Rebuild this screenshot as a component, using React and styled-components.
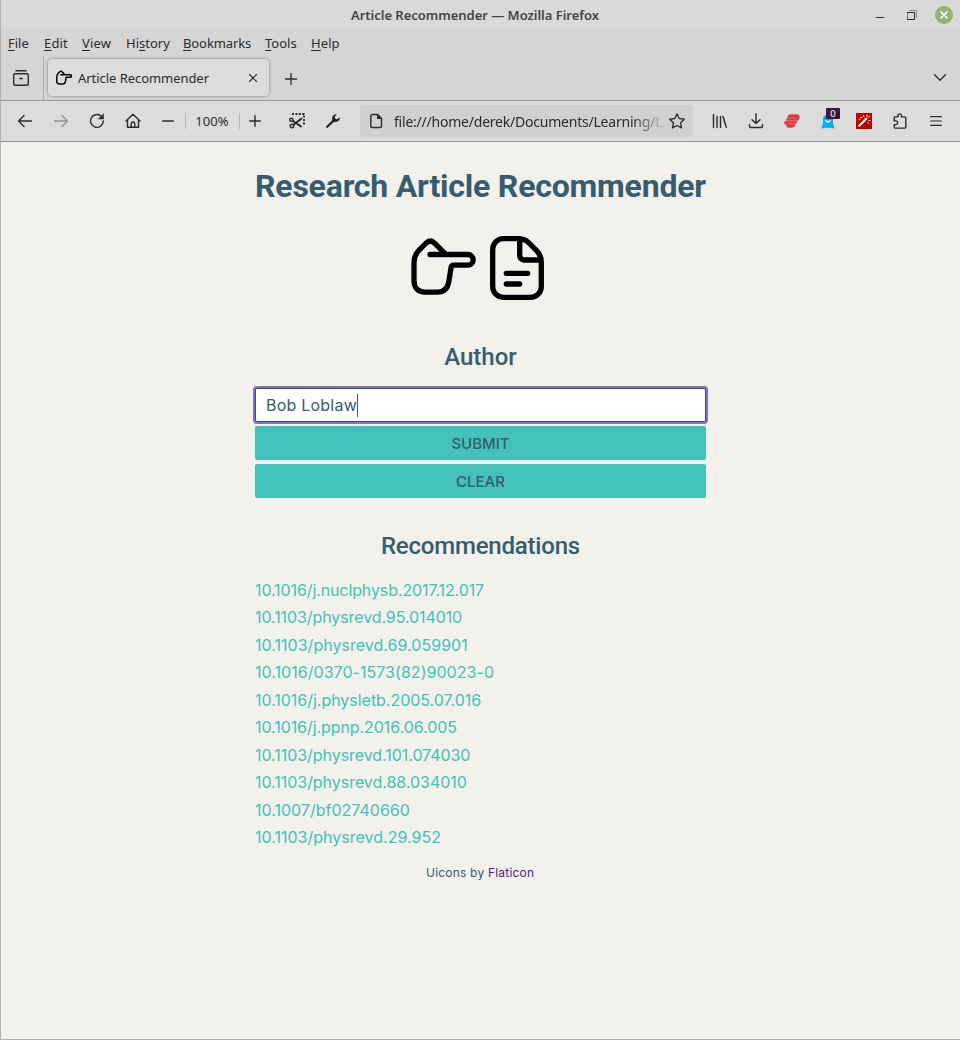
import React from "react";
import styled, { createGlobalStyle } from "styled-components";

const Global = createGlobalStyle`
  * { box-sizing: border-box; }
  body { margin: 0; background: #f2f1eb; }
`;

const ui = `"Noto Sans", "Open Sans", sans-serif`;
const head = `Roboto, sans-serif`;
const copy = `Inter, "Liberation Sans", sans-serif`;

const Window = styled.div`
  width: 960px; height: 1040px; display: flex; flex-direction: column; overflow: hidden;
  border-left: 1px solid #b1b1b0; border-bottom: 1px solid #b1b1b0;
  background: #f2f1eb; font-family: ${ui}; font-size: 13px; color: #2b2b2b;
`;
const Text = styled.span`white-space: nowrap; letter-spacing: ${(p) => p.$ls || 0}px;`;

const TitleBar = styled.header`
  height: 30px; flex: none; display: flex; align-items: center; background: #d9d9d9;
  font-weight: 600; color: #444; padding-left: 350px;
`;
const WindowButtons = styled.div`margin-left: auto; display: flex; align-items: center; height: 30px;`;
const MenuBar = styled.nav`
  height: 26px; flex: none; background: #d5d5d5; padding: 0 7px; display: flex; align-items: center;
`;
const MenuItem = styled.span`
  width: ${(p) => p.$w}px; line-height: 18px; white-space: nowrap; letter-spacing: ${(p) => p.$ls || 0}px;
  u { text-decoration: underline; text-decoration-thickness: 1px; text-underline-offset: 2px; }
`;
const TabStrip = styled.div`
  height: 45px; flex: none; background: #d5d5d5; border-bottom: 1px solid #949494; display: flex; align-items: stretch;
`;
const TabList = styled.div`width: 43px; border-right: 1px solid #aeaeae; display: flex; align-items: center; padding-left: 10px;`;
const Tab = styled.div`
  width: 221px; height: 37px; margin: 3px 0 0 4px; border-radius: 4px; background: #dcdcdc;
  box-shadow: 0 0 3px rgba(0,0,0,.45); display: flex; align-items: center; padding: 0 11px 0 8px;
`;
const TabName = styled.span`flex: 1; padding-left: 6px; white-space: nowrap; letter-spacing: -0.05px;`;
const IconCell = styled.span`
  width: ${(p) => p.$w || 36}px; height: ${(p) => p.$h || 40}px; flex: none; display: flex; align-items: center; justify-content: center;
  position: relative; svg { display: block; }
`;
const AllTabs = styled(IconCell)`margin-left: auto; margin-right: 2px;`;
const NavBar = styled.div`
  height: 41px; flex: none; background: #dcdcdc; border-bottom: 1px solid #949494; display: flex; align-items: center; padding-left: 6px;
`;
const Rule = styled.i`width: 1px; height: 16px; background: #b4b4b4;`;
const Zoom = styled.span`width: 53px; text-align: center; letter-spacing: 0.1px; padding-right: 1px;`;
const UrlBar = styled.div`
  width: 333px; height: 32px; margin-left: 18px; border-radius: 4px; background: #d0d0d0; display: flex; align-items: center; padding-left: 8px;
`;
const Url = styled.span`
  width: 268px; margin-left: 10px; overflow: hidden; white-space: nowrap; font-size: 14px; letter-spacing: -0.22px;
  mask-image: linear-gradient(to right, #000 238px, transparent 272px);
`;
const Extensions = styled.div`display: flex; margin-left: 9px;`;
const Badge = styled.b`
  position: absolute; left: 16px; top: 7px; width: 14px; height: 11px; border-radius: 1px; background: #3d1540; color: #fff;
  font: 9.5px/11px ${ui}; text-align: center;
`;

const Page = styled.main`
  width: 451px; margin-left: 254px; display: flex; flex-direction: column; color: #355c70; font-family: ${copy};
`;
const Title = styled.h1`
  margin: 24px 0 0; height: 40px; font: 700 32px/40px ${head}; white-space: nowrap; letter-spacing: -0.2px;
`;
const Art = styled.div`height: 64px; margin: 30px 0 0 156px; display: flex; gap: 15px; svg { overflow: visible; }`;
const Heading = styled.h2`
  margin: ${(p) => p.$top}px 0 0; height: 30px; font: 500 24px/30px ${head}; text-align: center; white-space: nowrap; letter-spacing: ${(p) => p.$ls || 0}px;
`;
const Field = styled.div`
  height: 34px; margin-top: 16px; padding-left: 10px; display: flex; align-items: center; background: #fff; border: 1px solid #2f5468;
  border-radius: 2px; box-shadow: 0 0 0 2px #8d6cc6; font-size: 16px;
`;
const Caret = styled.i`width: 1px; height: 23px; background: #355c70;`;
const Button = styled.button`
  height: 34px; margin-top: 4px; border: 0; border-radius: 2px; background: #43c1ba; color: #355c70; padding: 2px 0 0;
  font: 500 15px/32px ${copy};
`;
const List = styled.div`display: flex; flex-direction: column; margin-top: 15.7px; color: #43c1ba; font-size: 16px; line-height: 27.5px;`;
const Credit = styled.footer`
  margin-top: 11.3px; height: 20px; font-size: 12px; line-height: 20px; padding-left: 171px; white-space: pre; letter-spacing: 0.2px;
  a { color: #551a8b; }
`;

const S = ({ w = 16, h = w, vb, sw = 1.4, c = "#2b2b2b", children }) => (
  <svg width={w} height={h} viewBox={vb || `0 0 ${w} ${h}`} fill="none" stroke={c} strokeWidth={sw} strokeLinecap="round" strokeLinejoin="round">{children}</svg>
);
const Hand = ({ size = 64 }) => (
  <svg width={size} height={size} viewBox="0 0 64 64" fill="none" stroke="#000" strokeWidth={size > 20 ? 5.3 : 6} strokeLinecap="round" strokeLinejoin="round">
    <path d="M18.7 18.7H56.6a5.2 5.2 0 0 1 0 10.6H42.5C40 29.3 40 30 39.7 32L37.5 46C36.2 53 32.5 56.3 26.5 56.3H13.5C7 56.3 2.7 52 2.7 45V27C2.7 21 4.5 17.5 8 14L14.5 7.5C17.5 4.6 20.5 4.6 23.5 7.5L34.7 18.7" transform="translate(.3 -.2)" />
  </svg>
);
const Paper = () => (
  <svg width="54" height="64" viewBox="0 0 54 64" fill="none" stroke="#000" strokeWidth="5.3" strokeLinecap="round" strokeLinejoin="round">
    <path d="M13.4 2.7H28C33 2.7 36 4 39 7L46.6 14.6C50 18 51.3 21 51.3 26V50.7A10.6 10.6 0 0 1 40.7 61.3H13.4A10.6 10.6 0 0 1 2.7 50.7V13.4A10.6 10.6 0 0 1 13.4 2.7ZM29.7 3.5V19.5a4.3 4.3 0 0 0 4.3 4.5H50.5M16.3 37.3H37.7M16.3 48H29.7" />
  </svg>
);
const Scissors = () => (
  <S>
    <path d="M3 1H15V12" strokeDasharray="2 1.4" strokeWidth="1.8" strokeLinecap="butt" />
    <circle cx="2.4" cy="6.8" r="1.6" /><circle cx="3" cy="13" r="1.8" />
    <path d="M3.8 7.8 12 13.5M4.5 11.8 12.5 5.5" strokeWidth="2" />
  </S>
);
const Wrench = () => (
  <svg width="14" height="14" viewBox="0 0 14 14"><path d="M1.2 12.8 7 7.2" stroke="#222" strokeWidth="2.2" strokeLinecap="round" /><path d="M10.8 .3 8.8 2.8 9.3 4.8 11.3 5.2 13.7 3.2C14.3 6.2 11.8 8.4 9 7.8L7.8 8.6 5.600 6.400 6.300 5.200C5.600 2.400 7.800 -.3 10.800 .3Z" fill="#222" /></svg>
);
const Express = () => (
  <svg width="16" height="14" viewBox="0 0 16 14">
    <path d="M6.500 .3H12.500Q16 .6 15.700 3.500Q15.300 6.500 12.800 7.200Q13.500 9.500 11.500 9.800Q11.300 13.500 8 13.700H4.800Q2.200 13.500 2.300 11Q.2 10.800 .3 8.800Q.4 6.900 2.500 6.800Q1.800 4.400 3.300 4Q3.500 .6 6.500 .3Z" fill="#dd3a45" />
    <path d="M3.300 4H11.500M4.500 10H11.500M2.500 6.900H13" stroke="#e4a0a4" strokeWidth=".55" />
  </svg>
);
const Ghost = () => (
  <svg width="14" height="15" viewBox="0 0 14 15"><path d="M2 5Q2 .5 7 .5T12 5V10L13.5 14Q12 15 10.5 13.5Q9 15 7 13.5Q5 15 3.5 13.5Q2 15 .3 14L2 10Z" fill="#00aef0" /><path d="M4.3 6.5Q7 10.5 9.7 6.5Q7 8 4.3 6.5Z" fill="#fff" stroke="#fff" strokeWidth=".6" /></svg>
);
const Wand = () => (
  <svg width="16" height="16" viewBox="0 0 16 16" fill="none" stroke="#fff" strokeLinecap="round"><path d="M0 0H16V16H0Z" fill="#c00000" stroke="none" /><path d="M3.3 12.7 8.3 7.7" strokeWidth="2.2" /><path d="M9.5 6.5 10.2 5.8" strokeWidth="2.2" /><path d="M4.5 4.5H6M7.5 2.5 8 4M11 2V3.5M13.5 3.5 12.5 4.3M13 7.5H14M11.5 9 12.5 10.2M3.2 6.5 3.8 6.3" strokeWidth=".9" /></svg>
);

const menus = [["File", 0, 36, 0], ["Edit", 0, 38, 0.15], ["View", 0, 44, 0.15], ["History", 2, 57, 0], ["Bookmarks", 0, 82, -0.1], ["Tools", 0, 46, 0], ["Help", 0, 40, 0.1]];
const articles = [
  ["10.1016/j.nuclphysb.2017.12.017", -0.105], ["10.1103/physrevd.95.014010", -0.09], ["10.1103/physrevd.69.059901", 0.03],
  ["10.1016/0370-1573(82)90023-0", 0.04], ["10.1016/j.physletb.2005.07.016", -0.03], ["10.1016/j.ppnp.2016.06.005", -0.07],
  ["10.1103/physrevd.101.074030", -0.05], ["10.1103/physrevd.88.034010", -0.04], ["10.1007/bf02740660", 0.01], ["10.1103/physrevd.29.952", 0.01],
];

export default function App() {
  return (
    <>
      <Global />
      <Window>
        <TitleBar>
          <Text $ls={-0.02}>Article Recommender — Mozilla Firefox</Text>
          <WindowButtons>
            <IconCell $w={32} $h={30}><S w={8} h={6} sw={1}><path strokeLinecap="butt" d="M0 5.5H8" /></S></IconCell>
            <IconCell $w={31} $h={30}><S w={10} sw={1}><path d="M2.5 .5H9.5V7.5" stroke="#888" /><path d="M.5 2.5H7.5V9.5H.5Z" /></S></IconCell>
            <IconCell $w={33} $h={30}><svg width="18" height="18"><circle cx="9" cy="9" r="9" fill="#92b372" /><path d="M5.5 5.5 12.5 12.5M12.5 5.5 5.5 12.5" stroke="#fff" strokeWidth="1.6" /></svg></IconCell>
          </WindowButtons>
        </TitleBar>
        <MenuBar>
          {menus.map(([t, i, w, ls]) => <MenuItem key={t} $w={w} $ls={ls}>{t.slice(0, i)}<u>{t[i]}</u>{t.slice(i + 1)}</MenuItem>)}
        </MenuBar>
        <TabStrip>
          <TabList><S w={20} h={16}><path d="M5 .8H15M4 3.800H16Q17.300 3.800 17.300 5V13.500Q17.300 15.300 15.500 15.300H4.500Q2.700 15.300 2.700 13.500V5Q2.700 3.800 4 3.800ZM8.800 8.500H11.200" /></S></TabList>
          <Tab>
            <Hand size={16} /><TabName>Article Recommender</TabName>
            <S w={10} sw={1.1}><path d="M1.500 1.500 8.500 8.500M8.500 1.500 1.500 8.500" /></S>
          </Tab>
          <IconCell $w={43} $h={45}><S w={12} sw={1.3}><path d="M6 .5V11.5M.5 6H11.5" /></S></IconCell>
          <AllTabs $h={43}><S w={12} h={7} sw={1.3}><path d="M.6 .7 6 6.200 11.400 .7" /></S></AllTabs>
        </TabStrip>
        <NavBar>
          <IconCell><S><path d="M1.500 8H14.500M7 2.500 1.500 8 7 13.500" /></S></IconCell>
          <IconCell><S c="#939393"><path d="M1.500 8H14.500M9 2.500 14.500 8 9 13.500" /></S></IconCell>
          <IconCell><S><path d="M14.300 8A6.400 6.400 0 1 1 11.800 2.900" /><path d="M14.500 1V6H9.500Z" fill="#2b2b2b" strokeWidth=".5" /></S></IconCell>
          <IconCell $w={35}><S><path d="M1 8 8 1.300 15 8M2.500 7V14.300H13.500V7M6.300 14V10.500Q6.300 9 8 9T9.700 10.500V14" /></S></IconCell>
          <IconCell $w={35}><S w={12}><path d="M.7 6H11.300" /></S></IconCell>
          <Rule /><Zoom>100%</Zoom><Rule />
          <IconCell $w={30}><S w={12}><path d="M6 .7V11.300M.7 6H11.300" /></S></IconCell>
          <IconCell $w={54}><Scissors /></IconCell>
          <IconCell $w={18}><Wrench /></IconCell>
          <UrlBar>
            <S><path d="M4.300 1.500H9.500L13.500 5.500V13Q13.500 14.500 12 14.500H4.300Q2.800 14.500 2.800 13V3Q2.800 1.500 4.300 1.500Z" /><path d="M9.500 1.500V5.500H13.500Z" fill="#2b2b2b" strokeWidth="1" /></S>
            <Url>file:///home/derek/Documents/Learning/L</Url>
            <IconCell $w={30}><S sw={1.3}><path d="M8 .9 10.200 5.500 15.300 6.200 11.600 9.800 12.500 14.900 8 12.500 3.500 14.900 4.400 9.800 .7 6.200 5.800 5.500Z" /></S></IconCell>
          </UrlBar>
          <Extensions>
            <IconCell><S><path d="M1.500 1.500V14.500M5 3.500V14.500M8.500 3.500V14.500M11 3.500 14.300 14.300" /></S></IconCell>
            <IconCell><S><path d="M8 .8V10.500M4 6.700 8 10.600 12 6.700M1.500 11.500V13Q1.500 14.500 3 14.500H13Q14.500 14.500 14.500 13V11.500" /></S></IconCell>
            <IconCell><Express /></IconCell>
            <IconCell><Ghost /><Badge>0</Badge></IconCell>
            <IconCell><Wand /></IconCell>
            <IconCell><S><path d="M2.200 6V4.800Q2.200 3.900 3.200 3.900H6V2.500Q6 .9 7.700 .9T9.400 2.500V3.900H12.500Q13.800 3.900 13.800 5V13.900Q13.800 15.100 12.600 15.100H3.400Q2.200 15.100 2.200 13.900V11.600H4Q5.700 11.400 5.700 9.700T4 7.900H2.200Z" /></S></IconCell>
            <IconCell><S w={12} h={10} sw={1.2}><path d="M.6 .7H11.400M.6 5H11.400M.6 9.300H11.400" /></S></IconCell>
          </Extensions>
        </NavBar>
        <Page>
          <Title>Research Article Recommender</Title>
          <Art><Hand /><Paper /></Art>
          <Heading $top={42}>Author</Heading>
          <Field><Text $ls={0.22}>Bob Loblaw</Text><Caret /></Field>
          <Button>SUBMIT</Button><Button>CLEAR</Button>
          <Heading $top={33} $ls={-0.2}>Recommendations</Heading>
          <List>{articles.map(([a, ls]) => <Text key={a} $ls={ls}>{a}</Text>)}</List>
          <Credit>Uicons by <a>Flaticon</a></Credit>
        </Page>
      </Window>
    </>
  );
}
